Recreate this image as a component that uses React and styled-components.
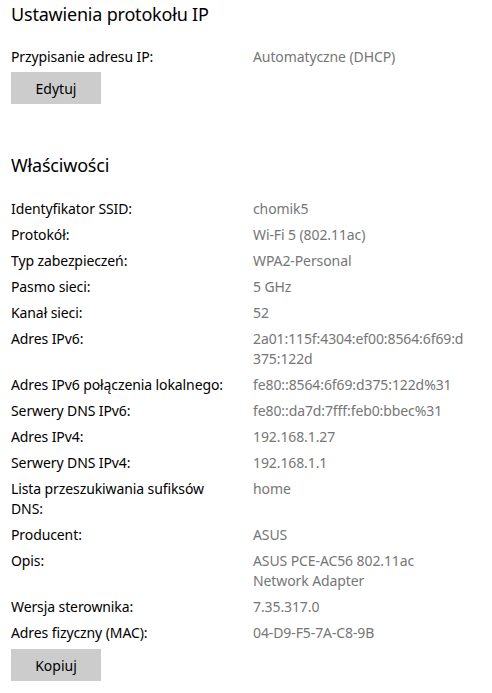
import React from "react";
import styled, { createGlobalStyle } from "styled-components";

const Global = createGlobalStyle`
  html, body { margin: 0; padding: 0; background: #ffffff; }
  body { font-family: "Noto Sans", "Open Sans", sans-serif; color: #000; }
`;

const Page = styled.div`
  padding: 0 0 0 11px;
  width: 492px;
  box-sizing: border-box;
`;

const Section = styled.section`
  display: flex;
  flex-direction: column;
  align-items: flex-start;
  margin-top: ${(p) => p.$top || 0}px;
`;

const Title = styled.h2`
  margin: 0;
  font-size: 18px;
  letter-spacing: -0.2px;
  font-weight: 400;
  line-height: 28px;
  color: #000;
`;

const Props = styled.dl`
  display: grid;
  grid-template-columns: 228px 215px;
  column-gap: 14px;
  row-gap: 6px;
  margin: ${(p) => p.$top}px 0 0 0;
  font-size: 14px;
  letter-spacing: -0.1px;
  line-height: 20px;
`;

const Label = styled.dt`
  margin: 0;
  color: #000;
`;

const Value = styled.dd`
  margin: 0;
  color: #767676;
  overflow-wrap: anywhere;
`;

const Button = styled.button`
  margin-top: ${(p) => p.$top}px;
  width: 90px;
  height: 32px;
  border: none;
  background: #cccccc;
  font-family: inherit;
  font-size: 14px;
  color: #000;
  padding: 0;
`;

const rows = [
  ["Identyfikator SSID:", "chomik5"],
  ["Protokół:", "Wi-Fi 5 (802.11ac)"],
  ["Typ zabezpieczeń:", "WPA2-Personal"],
  ["Pasmo sieci:", "5 GHz"],
  ["Kanał sieci:", "52"],
  ["Adres IPv6:", "2a01:115f:4304:ef00:8564:6f69:d375:122d"],
  ["Adres IPv6 połączenia lokalnego:", "fe80::8564:6f69:d375:122d%31"],
  ["Serwery DNS IPv6:", "fe80::da7d:7fff:feb0:bbec%31"],
  ["Adres IPv4:", "192.168.1.27"],
  ["Serwery DNS IPv4:", "192.168.1.1"],
  ["Lista przeszukiwania sufiksów DNS:", "home"],
  ["Producent:", "ASUS"],
  ["Opis:", "ASUS PCE-AC56 802.11ac Network Adapter"],
  ["Wersja sterownika:", "7.35.317.0"],
  ["Adres fizyczny (MAC):", "04-D9-F5-7A-C8-9B"],
];

export default function App() {
  return (
    <Page>
      <Global />
      <Section>
        <Title>Ustawienia protokołu IP</Title>
        <Props $top={19}>
          <Label>Przypisanie adresu IP:</Label>
          <Value>Automatyczne (DHCP)</Value>
        </Props>
        <Button $top={5}>Edytuj</Button>
      </Section>
      <Section $top={47}>
        <Title>Właściwości</Title>
        <Props $top={20}>
          {rows.map(([l, v]) => (
            <React.Fragment key={l}>
              <Label>{l}</Label>
              <Value>{v}</Value>
            </React.Fragment>
          ))}
        </Props>
        <Button $top={6}>Kopiuj</Button>
      </Section>
    </Page>
  );
}
